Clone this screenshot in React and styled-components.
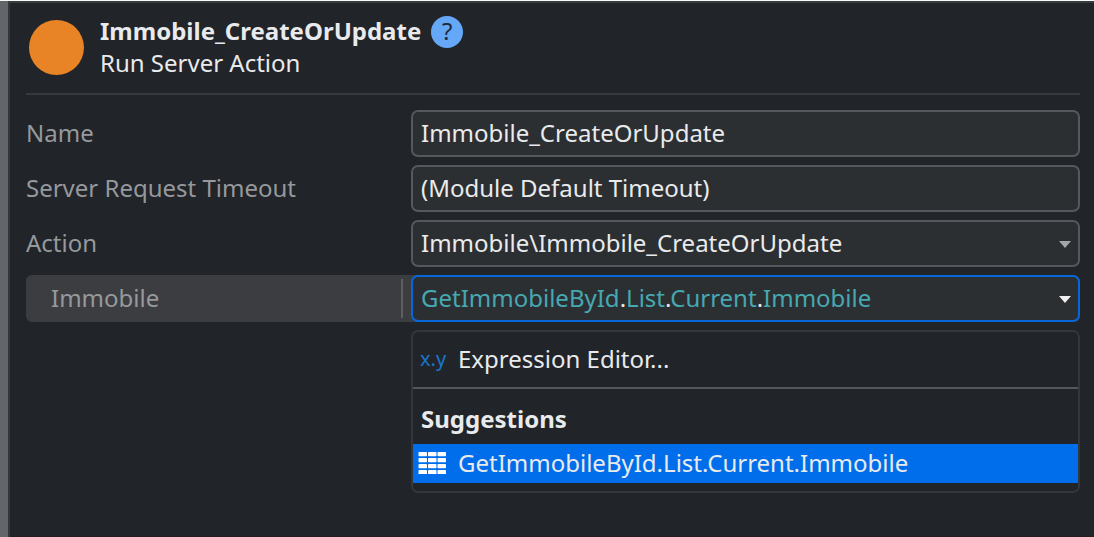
import React, { useState } from "react";
import styled, { createGlobalStyle } from "styled-components";

const GlobalStyle = createGlobalStyle`
  *, *::before, *::after { box-sizing: border-box; }
  body {
    margin: 0;
    border-top: 1px solid #f8faf8;
    background: #212429;
    color: #e9eaec;
    font-family: "Noto Sans", sans-serif;
    font-size: 24px;
    line-height: 30px;
  }
  button, input, select { font: inherit; color: inherit; margin: 0; }
`;

const Panel = styled.main`
  min-height: calc(100vh - 1px);
  padding: 13px 14px 14px 18px;
  background: #212429;
  border-left: 8px solid #62666a;
  box-shadow: inset 0 2px 0 #373d3c, inset 2px 0 0 #34363b, inset 0 -1px 0 #241d21;
`;

const Header = styled.header`
  display: flex;
  align-items: center;
  gap: 16px;
  padding: 2px 0 15px 3px;
  border-bottom: 2px solid #36383c;
`;

const ActionDot = styled.span`
  flex: none;
  width: 55px;
  height: 55px;
  border-radius: 50%;
  background: #e88426;
`;

const TitleLine = styled.div`
  display: flex;
  align-items: center;
  gap: 10px;
  height: 32px;
`;

const Title = styled.h1`
  margin: 0;
  padding-bottom: 2px;
  font-size: 24px;
  line-height: 30px;
  font-weight: 700;
`;

const Subtitle = styled.p`
  margin: 0;
`;

const HelpButton = styled.button`
  display: grid;
  place-items: center;
  width: 32px;
  height: 32px;
  padding: 0 0 2px;
  border: 0;
  border-radius: 50%;
  background: #64a8f7;
  color: #212b38;
  cursor: pointer;
`;

const Form = styled.form`
  display: grid;
  gap: 8px;
  padding-top: 15px;
`;

const Row = styled.div`
  display: grid;
  grid-template-columns: 385px minmax(0, 1fr);
  align-items: center;
  border-radius: 6px;
  background: ${(p) => (p.$active ? "#3c3d41" : "transparent")};
`;

const Label = styled.label`
  display: flex;
  align-items: center;
  height: 39px;
  margin-right: 8px;
  padding-bottom: 2px;
  padding-left: ${(p) => (p.$nested ? "25px" : "0")};
  border-right: 2px solid ${(p) => (p.$nested ? "#5c5e62" : "transparent")};
  color: #96999c;
`;

const control = `
  width: 100%;
  height: 47px;
  padding: 0 8px 2px;
  border: 2px solid #55595c;
  border-radius: 7px;
  background: #2c2f32;
  outline: none;
`;

const TextField = styled.input`
  ${control}
`;

const SelectWrap = styled.div`
  display: grid;
  align-items: center;

  & > * { grid-area: 1 / 1; }
`;

const SelectField = styled.select`
  ${control}
  appearance: none;
`;

const ExpressionField = styled.button`
  ${control}
  border-color: #0567da;
  text-align: left;
  color: #46a8b0;
`;

const Dot = styled.span`
  color: #e6e7e9;
`;

const Caret = styled.svg`
  justify-self: end;
  width: 12px;
  height: 7px;
  margin: 2px 9px 0 0;
  fill: ${(p) => (p.$bright ? "#f0f0f0" : "#a4a6a8")};
  pointer-events: none;
`;

const Menu = styled.div`
  margin-left: 385px;
  padding-bottom: 8px;
  border: 2px solid #33363a;
  border-radius: 7px;
  background: #212429;
`;

const MenuItem = styled.button`
  display: flex;
  align-items: center;
  gap: 12px;
  width: 100%;
  height: ${(p) => (p.$selected ? "39px" : "55px")};
  padding: 0 5px 2px;
  border: 0;
  background: ${(p) => (p.$selected ? "#006eeb" : "transparent")};
  text-align: left;
`;

const MenuHeading = styled.h2`
  margin: 0;
  padding: 15px 8px 10px;
  border-top: 2px solid #55585b;
  font-size: 24px;
  line-height: 30px;
  font-weight: 700;
`;

const ExpressionMark = styled.span`
  width: 28px;
  padding-left: 2px;
  color: #1976cf;
  font-size: 20px;
  line-height: 30px;
`;

function CaretIcon({ bright }) {
  return (
    <Caret $bright={bright} viewBox="0 0 12 7" aria-hidden="true">
      <path d="M0 0h12L6 7z" />
    </Caret>
  );
}

function TableIcon() {
  const columns = [0.5, 10, 19.5];
  const rows = [0, 6, 12, 18];
  return (
    <svg width="28" height="22" viewBox="0 0 28 22" fill="#fff" aria-hidden="true">
      {rows.map((y) =>
        columns.map((x) => <rect key={`${x}-${y}`} x={x} y={y} width="8.5" height="4.2" rx="0.8" />)
      )}
    </svg>
  );
}

function Expression({ value }) {
  return value.split(".").map((part, i) => (
    <React.Fragment key={i}>
      {i > 0 && <Dot>.</Dot>}
      {part}
    </React.Fragment>
  ));
}

export default function App() {
  const [name, setName] = useState("Immobile_CreateOrUpdate");
  const [timeout, setTimeoutValue] = useState("(Module Default Timeout)");
  const source = "GetImmobileById.List.Current.Immobile";

  return (
    <>
      <GlobalStyle />
      <Panel>
        <Header>
          <ActionDot />
          <div>
            <TitleLine>
              <Title>{name}</Title>
              <HelpButton type="button" aria-label="Help">?</HelpButton>
            </TitleLine>
            <Subtitle>Run Server Action</Subtitle>
          </div>
        </Header>
        <Form>
          <Row>
            <Label htmlFor="name">Name</Label>
            <TextField id="name" value={name} onChange={(e) => setName(e.target.value)} />
          </Row>
          <Row>
            <Label htmlFor="timeout">Server Request Timeout</Label>
            <TextField id="timeout" value={timeout} onChange={(e) => setTimeoutValue(e.target.value)} />
          </Row>
          <Row>
            <Label htmlFor="action">Action</Label>
            <SelectWrap>
              <SelectField id="action">
                <option>Immobile\Immobile_CreateOrUpdate</option>
              </SelectField>
              <CaretIcon />
            </SelectWrap>
          </Row>
          <Row $active>
            <Label $nested htmlFor="immobile">Immobile</Label>
            <SelectWrap>
              <ExpressionField id="immobile" type="button" aria-haspopup="menu" aria-expanded="true">
                <Expression value={source} />
              </ExpressionField>
              <CaretIcon bright />
            </SelectWrap>
          </Row>
          <Menu role="menu">
            <MenuItem type="button" role="menuitem">
              <ExpressionMark>x.y</ExpressionMark>
              Expression Editor...
            </MenuItem>
            <MenuHeading>Suggestions</MenuHeading>
            <MenuItem $selected type="button" role="menuitem">
              <TableIcon />
              {source}
            </MenuItem>
          </Menu>
        </Form>
      </Panel>
    </>
  );
}
